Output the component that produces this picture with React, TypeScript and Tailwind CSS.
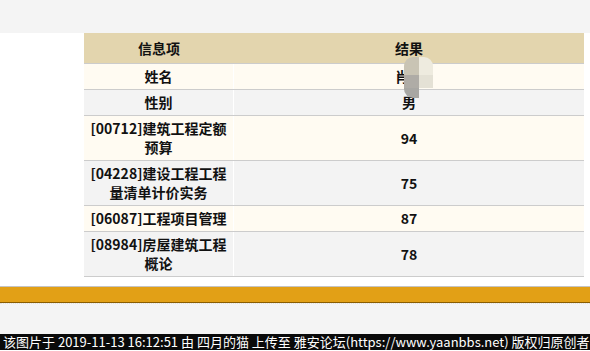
import React from 'react';

const rows = [
  { label: ['姓名'], value: '肖某', tall: false, cream: true },
  { label: ['性别'], value: '男', tall: false, cream: false },
  { label: ['[00712]建筑工程定额', '预算'], value: '94', tall: true, cream: true },
  { label: ['[04228]建设工程工程', '量清单计价实务'], value: '75', tall: true, cream: false },
  { label: ['[06087]工程项目管理'], value: '87', tall: false, cream: true },
  { label: ['[08984]房屋建筑工程', '概论'], value: '78', tall: true, cream: false },
];

function Blur() {
  // mosaic that hides the name
  return (
    <div className="absolute left-[404px] top-[57px] grid h-[41px] w-[29px] grid-cols-[15px_14px] grid-rows-[18px_13px_10px] overflow-hidden rounded-[9px]">
      <div className="bg-[#c9c4b4]" />
      <div className="bg-[#eeebdf]" />
      <div className="bg-[#afaca6]" />
      <div className="bg-[#e4e1d5]" />
      <div className="bg-[#a8a7a3]" />
      <div className="bg-transparent" />
    </div>
  );
}

export default function App() {
  return (
    <div className="relative h-[351px] w-[590px] overflow-hidden bg-white font-['Noto_Sans_CJK_SC',sans-serif] text-[14px] font-bold text-[#111]">
      <div className="h-[33px] bg-[#f4f4f4]" />

      <div className="ml-[84px] w-[500px]">
        <div className="flex h-[31px] border-b border-[#cccccc] bg-[#e3d5ae] leading-[19px]">
          <div className="flex w-[150px] items-center justify-center">信息项</div>
          <div className="flex flex-1 items-center justify-center">结果</div>
        </div>
        {rows.map((r, i) => (
          <div
            key={i}
            className={`flex border-b border-[#cccccc] leading-[19px] ${r.tall ? 'h-[45px]' : 'h-[26px]'} ${r.cream ? 'bg-[#fffbf2]' : 'bg-[#f3f3f3]'}`}
          >
            <div className="flex w-[150px] flex-col items-center justify-center border-r border-white text-center">
              {r.label.map((l) => (
                <span key={l}>{l}</span>
              ))}
            </div>
            <div className="flex flex-1 items-center justify-center">{r.value}</div>
          </div>
        ))}
      </div>

      <div className="mt-[9px] h-px bg-[#c4c4c4]" />
      <div className="h-[16px] border-b border-[#8a5d00] bg-[#e2a016]" />
      <div className="h-[31px] border-t border-dotted border-[#e0e0e0] bg-[#f4f4f4]" />
      <div className="h-[16px] whitespace-nowrap bg-[#0a0a0a] pl-[3px] text-[13px] font-normal leading-[16px] text-white">
        该图片于 2019-11-13 16:12:51 由 四月的猫 上传至 雅安论坛(https://www.yaanbbs.net) 版权归原创者
      </div>

      <Blur />
    </div>
  );
}
